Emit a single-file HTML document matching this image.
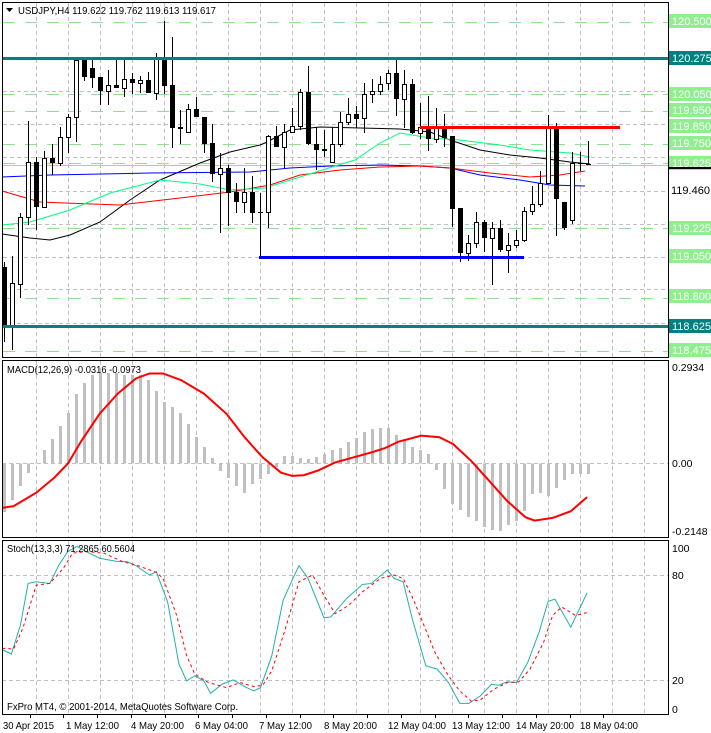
<!DOCTYPE html>
<html><head><meta charset="utf-8"><style>
html,body{margin:0;padding:0;background:#fff;width:711px;height:733px;overflow:hidden}
svg{display:block;font-family:"Liberation Sans",sans-serif}
</style></head><body>
<svg id="s" width="711" height="733" viewBox="0 0 711 733" xmlns="http://www.w3.org/2000/svg">
<rect width="711" height="733" fill="#fff"/>
<g id="grid" stroke="#c0c0c0" stroke-dasharray="4,3" stroke-width="1"></g>
<g id="green" stroke="#90e090" stroke-dasharray="12,10" stroke-width="1"></g>
<line x1="2" y1="165.5" x2="668" y2="165.5" stroke="#c0c0c0"/>
<polyline fill="none" stroke="#000" stroke-width="1" points="2,234 30,238 50,240 70,235 100,222 130,200 160,180 200,163 230,152 260,145 265,143 290,130 320,127 360,128 400,129 430,132 450,140 480,150 510,155 540,158 570,162 590,164"/>
<polyline fill="none" stroke="#0000ff" stroke-width="1" points="2,177 50,175 150,173 250,172 290,168 330,166 380,165 420,166 450,168 480,175 520,180 550,185 585,186"/>
<polyline fill="none" stroke="#ff0000" stroke-width="1" points="2,191 40,202 65,203 120,205 180,198 230,192 270,185 300,175 340,170 380,167 420,166 450,168 490,173 530,177 560,175 585,171"/>
<polyline fill="none" stroke="#00ff7f" stroke-width="1" points="2,225 30,222 70,210 110,193 160,180 200,184 230,190 265,188 300,177 345,163 355,160 380,143 400,133 430,138 460,140 500,145 530,150 570,153 590,157"/>
<g id="candles"></g>
<rect x="2" y="57" width="666" height="3" fill="#008080"/>
<rect x="2" y="325" width="666" height="3" fill="#008080"/>
<rect x="420" y="126" width="200" height="3" fill="#ff0000"/>
<rect x="259" y="256" width="265" height="3" fill="#0000ff"/>
<rect x="2.5" y="2.5" width="666" height="355" fill="none" stroke="#000"/>
<g font-size="11" fill="#fff" id="labels"></g>
<text x="671" y="194" font-size="11" fill="#000">119.460</text>
<rect x="669" y="167" width="42" height="2" fill="#000"/>
<polygon points="6,8 13,8 9.5,12" fill="#000"/>
<text x="18" y="14" font-size="10.5" fill="#000" textLength="198" lengthAdjust="spacingAndGlyphs">USDJPY,H4  119.622 119.762 119.613 119.617</text>

<!-- MACD -->
<g id="grid2" stroke="#c0c0c0" stroke-dasharray="4,3"></g>
<line x1="2" y1="463.5" x2="668" y2="463.5" stroke="#c0c0c0" stroke-dasharray="4,3"/>
<g id="bars" stroke="#c0c0c0" stroke-width="3"></g>
<g transform="translate(0,360) scale(0.453,0.336)">
<polyline fill="none" stroke="#ff0000" stroke-width="2" vector-effect="non-scaling-stroke" points="5,440 30,435 80,395 120,350 150,308 180,240 220,160 260,100 300,55 330,40 360,40 400,60 450,100 500,160 540,230 580,290 620,335 645,345 670,343 700,330 740,305 780,290 820,275 850,262 880,243 930,225 970,230 1000,250 1040,300 1080,360 1120,420 1160,468 1180,478 1220,470 1260,450 1296,408"/>
</g>
<rect x="2.5" y="360.5" width="666" height="177" fill="none" stroke="#000"/>
<text x="7" y="373" font-size="10.5" fill="#000" textLength="134" lengthAdjust="spacingAndGlyphs">MACD(12,26,9) -0.0316 -0.0973</text>
<text x="672" y="371" font-size="10.5" fill="#000">0.2934</text>
<text x="672" y="467" font-size="10.5" fill="#000">0.00</text>
<text x="672" y="535" font-size="10.5" fill="#000">-0.2148</text>

<!-- Stoch -->
<line x1="2" y1="575.5" x2="668" y2="575.5" stroke="#c0c0c0" stroke-dasharray="4,3"/>
<line x1="2" y1="680.5" x2="668" y2="680.5" stroke="#c0c0c0" stroke-dasharray="4,3"/>
<g transform="translate(0,360) scale(0.453,0.336)">
<polyline fill="none" stroke="#20b2aa" stroke-width="1" vector-effect="non-scaling-stroke" points="5,862 25,875 45,790 62,665 80,660 110,665 130,610 150,570 170,555 190,570 220,590 260,600 280,600 300,612 330,640 345,630 370,720 395,905 412,955 430,940 450,955 465,992 490,965 515,952 540,972 560,985 575,975 600,880 625,715 645,655 660,612 680,650 715,767 730,765 765,710 800,668 820,665 855,625 870,650 890,660 910,770 940,910 965,920 990,960 1015,1022 1035,1022 1060,1000 1085,965 1100,968 1120,958 1140,960 1165,900 1190,810 1210,718 1225,712 1260,795 1296,693"/>
<polyline fill="none" stroke="#ff0000" stroke-width="1" stroke-dasharray="3,3" vector-effect="non-scaling-stroke" points="5,858 30,860 50,800 80,670 110,665 140,620 160,575 190,570 230,575 270,600 300,610 345,632 360,650 390,760 412,880 430,935 460,960 500,975 530,960 560,972 580,968 600,925 630,800 660,660 690,640 715,700 740,755 770,730 800,690 840,650 870,640 890,650 910,705 930,770 960,870 990,940 1015,985 1040,1015 1060,1012 1090,980 1120,960 1145,958 1170,920 1200,840 1220,760 1240,735 1270,760 1296,752"/>
</g>
<rect x="2.5" y="540.5" width="666" height="174" fill="none" stroke="#000"/>
<text x="7" y="552" font-size="10.5" fill="#000" textLength="128" lengthAdjust="spacingAndGlyphs">Stoch(13,3,3) 71.2865 60.5604</text>
<text x="7" y="710" font-size="10.5" fill="#000" textLength="231" lengthAdjust="spacingAndGlyphs">FxPro MT4, © 2001-2014, MetaQuotes Software Corp.</text>
<text x="672" y="552" font-size="10.5" fill="#000">100</text>
<text x="672" y="579" font-size="10.5" fill="#000">80</text>
<text x="672" y="684" font-size="10.5" fill="#000">20</text>
<text x="672" y="713" font-size="10.5" fill="#000">0</text>
<g font-size="10.5" fill="#000" id="dates">
<text x="3" y="729" textLength="51" lengthAdjust="spacingAndGlyphs">30 Apr 2015</text>
<text x="66" y="729" textLength="53" lengthAdjust="spacingAndGlyphs">1 May 12:00</text>
<text x="131" y="729" textLength="53" lengthAdjust="spacingAndGlyphs">4 May 20:00</text>
<text x="195" y="729" textLength="53" lengthAdjust="spacingAndGlyphs">6 May 04:00</text>
<text x="259" y="729" textLength="53" lengthAdjust="spacingAndGlyphs">7 May 12:00</text>
<text x="324" y="729" textLength="53" lengthAdjust="spacingAndGlyphs">8 May 20:00</text>
<text x="388" y="729" textLength="58" lengthAdjust="spacingAndGlyphs">12 May 04:00</text>
<text x="452" y="729" textLength="58" lengthAdjust="spacingAndGlyphs">13 May 12:00</text>
<text x="516" y="729" textLength="58" lengthAdjust="spacingAndGlyphs">14 May 20:00</text>
<text x="580" y="729" textLength="58" lengthAdjust="spacingAndGlyphs">18 May 04:00</text>
</g>
<g id="ticks" stroke="#000"></g>
</svg>
<script>
var NS="http://www.w3.org/2000/svg";
function el(p,t,a){var e=document.createElementNS(NS,t);for(var k in a)e.setAttribute(k,a[k]);document.getElementById(p).appendChild(e);return e;}
for(var x=36;x<668;x+=32){el('grid','line',{x1:x+.5,y1:3,x2:x+.5,y2:357});el('grid2','line',{x1:x+.5,y1:361,x2:x+.5,y2:537});el('grid2','line',{x1:x+.5,y1:541,x2:x+.5,y2:714});}
[91,124,157,191,224,257,289,323].forEach(function(y){el('grid','line',{x1:3,y1:y+.5,x2:668,y2:y+.5});});
[22,94,111,144,163,228,298,351].forEach(function(y){el('green','line',{x1:3,y1:y+.5,x2:668,y2:y+.5});});
[30,63,97,131,165,198,232,266,300,333,367,401,435,468,502,536,570,603].forEach(function(x){el('ticks','line',{x1:x+.5,y1:714,x2:x+.5,y2:718});});
var L=[[21,'120.500','#90ee90'],[58,'120.275','#008080'],[94,'120.050','#90ee90'],[110,'119.950','#90ee90'],[126,'119.850','#90ee90'],[143,'119.750','#90ee90'],[163,'119.625','#90ee90'],[228,'119.225','#90ee90'],[256,'119.050','#90ee90'],[296,'118.800','#90ee90'],[326,'118.625','#008080'],[350,'118.475','#90ee90']];
L.forEach(function(l){el('labels','rect',{x:669,y:l[0]-7,width:42,height:14,fill:l[2]});var t=el('labels','text',{x:672,y:l[0]+4});t.textContent=l[1];});
var C=[[267,325,262,342,0],[283,325,256,350,1],[217,284,213,298,1],[162,217,121,225,1],[162,207,157,230,0],[158,207,151,207,1],[158,163,144,175,0],[137,163,127,166,1],[117,137,114,153,1],[60,117,57,142,1],[59,77,57,81,0],[68,78,60,88,0],[77,91,77,105,0],[85,91,70,105,1],[85,88,59,88,0],[79,88,59,97,1],[79,83,73,94,0],[80,83,76,93,1],[80,93,72,93,0],[58,93,53,100,1],[58,86,21,94,0],[85,128,37,148,0],[127,129,110,144,0],[109,132,104,133,1],[109,117,97,117,0],[117,144,117,153,0],[143,174,124,182,0],[168,174,153,233,1],[168,193,165,226,0],[192,202,183,213,0],[192,202,168,213,1],[192,213,176,223,0],[212,213,193,257,0],[136,212,135,228,1],[136,147,126,147,0],[132,147,124,168,1],[126,132,108,132,1],[92,126,89,130,1],[92,144,66,145,0],[144,150,127,170,0],[149,151,130,157,0],[144,162,127,162,1],[122,144,112,147,1],[114,122,98,125,1],[114,119,106,128,0],[94,118,83,133,1],[91,94,79,103,1],[84,91,76,95,1],[73,83,70,90,1],[73,99,59,116,0],[84,99,70,128,1],[84,133,79,134,0],[127,133,103,139,1],[127,139,96,151,0],[126,139,108,143,1],[126,138,114,147,0],[136,209,136,227,0],[208,253,208,262,0],[243,253,235,261,1],[222,243,212,248,1],[222,238,220,252,0],[228,238,222,285,1],[228,250,220,252,0],[245,250,233,273,1],[240,245,230,248,1],[211,240,207,242,1],[204,211,186,215,1],[183,204,171,207,1],[128,183,115,183,1],[128,199,123,236,0],[202,228,202,230,0],[163,220,152,224,1],[163,164,152,171,0],[164,165,141,165,0]];
C.forEach(function(c,i){var x=4+8*i;el('candles','line',{x1:x+.5,y1:c[2],x2:x+.5,y2:c[3],stroke:'#000'});
 if(c[4])el('candles','rect',{x:x-1.5,y:c[0]+.5,width:4,height:Math.max(c[1]-c[0],1),fill:'#fff',stroke:'#000'});
 else el('candles','rect',{x:x-2,y:c[0],width:5,height:Math.max(c[1]-c[0],1),fill:'#000'});});
var B=[512,500,486,473,463,450,439,426,413,394,383,375,373,373,373,375,375,375,380,391,402,407,413,424,437,447,458,471,478,486,493,484,479,474,467,456,456,458,459,457,454,450,448,442,438,432,429,428,428,435,439,447,450,454,470,489,504,510,517,521,527,530,531,525,521,511,494,493,496,488,480,474];
while(B.length<74)B.push(474);
B.forEach(function(y,i){var x=4.5+8*i;el('bars','line',{x1:x,y1:463.5,x2:x,y2:y});});
</script>
</body></html>
